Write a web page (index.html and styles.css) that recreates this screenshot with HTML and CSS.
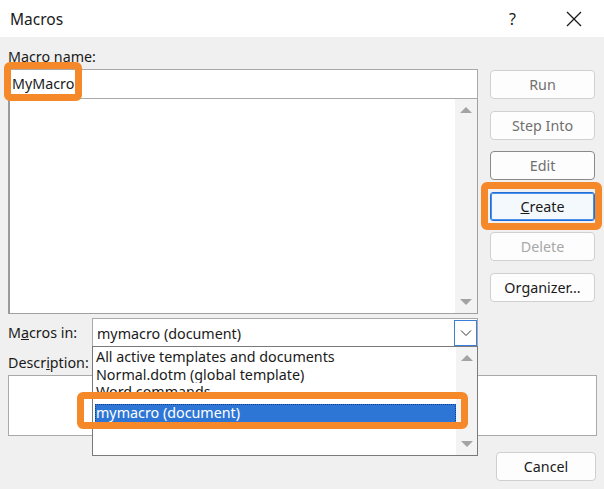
FILE: index.html
```html
<!DOCTYPE html>
<html>
<head>
<meta charset="utf-8">
<link rel="stylesheet" href="styles.css">
</head>
<body>
<div class="dialog">
  <div class="titlebar">
    <span class="title">Macros</span>
    <span class="help">?</span>
    <svg class="close" width="16" height="16" viewBox="0 0 16 16"><path d="M1 1 L15 15 M15 1 L1 15" stroke="#1a1a1a" stroke-width="1.3" fill="none"/></svg>
  </div>
  <div class="body">
    <div class="top">
      <div class="left">
        <div class="label name-label">Macro name:</div>
        <div class="field-wrap">
          <div class="textbox"><span class="name-text">MyMacro</span></div>
          <div class="hl hl-name"></div>
        </div>
        <div class="listbox">
          <div class="list-area"></div>
          <div class="vscroll">
            <span class="arrow up"></span>
            <span class="arrow down"></span>
          </div>
        </div>
      </div>
      <div class="buttons">
        <div class="btn dim">Run</div>
        <div class="btn dim">Step Into</div>
        <div class="btn edit dim">Edit</div>
        <div class="btn-wrap">
          <div class="btn create"><u>C</u>reate</div>
          <div class="hl hl-create"></div>
        </div>
        <div class="btn faint">Delete</div>
        <div class="btn">Or<u>g</u>anizer...</div>
      </div>
    </div>
    <div class="macros-in">
      <div class="label in-label">M<u>a</u>cros in:</div>
      <div class="combo-wrap">
        <div class="combo">
          <span class="combo-text">mymacro (document)</span>
          <span class="combo-btn"><svg width="12" height="8" viewBox="0 0 12 8"><path d="M1 1.5 L6 6.5 L11 1.5" stroke="#333" stroke-width="1" fill="none"/></svg></span>
        </div>
        <div class="droplist">
          <div class="items">
            <div class="item">All active templates and documents</div>
            <div class="item">Normal.dotm (global template)</div>
            <div class="item">Word commands</div>
            <div class="item selected"><span class="sel-inner">mymacro (document)</span></div>
          </div>
          <div class="vscroll small">
            <span class="arrow up"></span>
            <span class="arrow down"></span>
          </div>
          <div class="hl hl-sel"></div>
        </div>
      </div>
    </div>
    <div class="label desc-label">Descr<u>i</u>ption:</div>
    <div class="desc-box"></div>
    <div class="bottom">
      <div class="btn cancel">Cancel</div>
    </div>
  </div>
</div>
</body>
</html>
```

FILE: styles.css
```css
* { box-sizing: border-box; }
html, body { margin: 0; padding: 0; }
body {
  width: 604px;
  height: 489px;
  font-family: "Noto Sans", "Open Sans", sans-serif;
  font-size: 14.3px;
  color: #1a1a1a;
  background: #f0f0f0;
  overflow: hidden;
}
.dialog { width: 604px; height: 489px; background: #f0f0f0; }
.titlebar {
  height: 37px;
  background: #ffffff;
  display: flex;
  align-items: center;
  padding-left: 10px;
  padding-right: 22px;
}
.title { font-size: 15.5px; flex: 1; color: #1a1a1a; }
.help { font-size: 16px; margin-right: 50px; color: #1a1a1a; }
.close { display: block; }

.body { padding: 0 7px 0 8px; }
.top { display: flex; gap: 12px; }
.left { width: 470px; }
.label { line-height: 18px; }
.name-label { margin-top: 11px; height: 21px; }
.field-wrap { position: relative; }
.textbox {
  height: 30px;
  background: #fff;
  border: 1px solid #a9a9a9;
  padding: 4px 0 0 3px;
  line-height: 20px;
}
.hl {
  position: absolute;
  border: 7px solid #f5892a;
  border-radius: 6px;
}
.hl-name { left: -4px; top: -7px; width: 78px; height: 39px; }
.listbox {
  height: 215px;
  background: #fff;
  border: 1px solid #a0a0a0;
  border-top: none;
  border-left: 2px solid #9a9a9a;
  display: flex;
}
.list-area { flex: 1; }
.vscroll {
  width: 22px;
  background: #f3f3f3;
  position: relative;
}
.arrow {
  position: absolute;
  left: 5px;
  width: 0; height: 0;
  border-left: 6px solid transparent;
  border-right: 6px solid transparent;
}
.arrow.up { top: 8px; border-bottom: 6px solid #a3a3a3; }
.arrow.down { bottom: 8px; border-top: 6px solid #a3a3a3; }

.buttons {
  width: 105px;
  margin-top: 33px;
  display: flex;
  flex-direction: column;
  gap: 11.6px;
}
.btn {
  height: 29px;
  border: 1px solid #d0d0d0;
  border-radius: 4px;
  background: #fdfdfd;
  display: flex;
  align-items: center;
  justify-content: center;
  color: #1a1a1a;
}
.btn.dim { color: #707070; }
.btn.faint { color: #a8a8a8; }
.btn.edit { border-color: #8a8a8a; }
.btn-wrap { position: relative; }
.btn.create {
  border: 1px solid #1f6fd6;
  box-shadow: inset 0 0 0 1px #4a90e8;
  background: #f4f9fe;
  border-radius: 3px;
}
.hl-create { left: -9px; top: -10px; width: 121px; height: 48px; }

.macros-in {
  display: flex;
  align-items: center;
  margin-top: 4px;
  height: 30px;
}
.in-label { width: 84px; }
.combo-wrap { position: relative; width: 386px; }
.combo {
  height: 30px;
  background: #fff;
  border: 1px solid #a9a9a9;
  display: flex;
  align-items: center;
  padding-left: 4px;
}
.combo-text { flex: 1; }
.combo-btn {
  width: 23px;
  height: 26px;
  border: 1px solid #3b7fd9;
  display: flex;
  align-items: center;
  justify-content: center;
  background: #fff;
}
.droplist {
  position: absolute;
  left: 0;
  top: 28px;
  width: 386px;
  height: 110px;
  background: #fff;
  border: 1px solid #7a7a7a;
  display: flex;
  z-index: 2;
}
.items { flex: 1; padding-top: 1px; }
.item { height: 17.5px; line-height: 17px; padding-left: 3px; white-space: nowrap; overflow: hidden; }
.item.selected {
  height: 20px;
  margin-top: 3px;
  padding: 0 0 0 2px;
}
.sel-inner {
  display: block;
  background: #2e76d6;
  color: #fff;
  height: 19px;
  line-height: 18px;
  padding-left: 1px;
  outline: 1px dotted #0b3c8a;
  outline-offset: -1px;
}
.vscroll.small { width: 21px; }
.hl-sel { left: -16px; top: 45px; width: 391px; height: 37px; }

.desc-label { margin-top: 6px; height: 21px; }
.desc-box {
  height: 61px;
  background: #fff;
  border: 1px solid #a9a9a9;
  width: 589px;
}
.bottom { display: flex; justify-content: flex-end; padding-right: 1px; margin-top: 16px; }
.btn.cancel { width: 100px; border-color: #cfcfcf; }
```
